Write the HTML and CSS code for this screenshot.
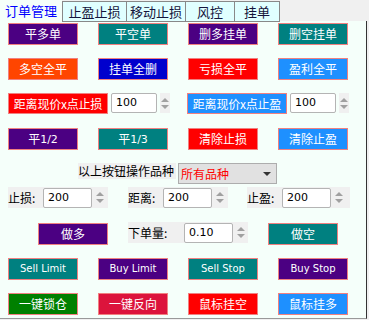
FILE: index.html
```html
<!DOCTYPE html>
<html lang="zh">
<head>
  <meta charset="UTF-8" />
  <title>订单管理</title>
  <link rel="stylesheet" href="styles.css">
</head>
<body>

  <!-- 标签栏 -->
  <div class="tabs">
    <div class="tab active t1">订单管理</div>
    <div class="tab t2">止盈止损</div>
    <div class="tab t3">移动止损</div>
    <div class="tab t4">风控</div>
    <div class="tab t5 last">挂单</div>
  </div>

  <div class="panel">
    <div class="grid">
      <div class="btn indigo">平多单</div>
      <div class="btn teal">平空单</div>
      <div class="btn indigo">删多挂单</div>
      <div class="btn teal">删空挂单</div>
    </div>
    <div class="grid">
      <div class="btn orange">多空全平</div>
      <div class="btn mblue">挂单全删</div>
      <div class="btn red">亏损全平</div>
      <div class="btn dblue">盈利全平</div>
    </div>

    <!-- 距离现价 -->
    <div class="dist-row">
      <div class="dist-group">
        <div class="btn red wide">距离现价x点止损</div>
        <div class="spin">
          <div class="spin-box">100</div>
          <div class="spin-arrows"><span class="up"></span><span class="down"></span></div>
        </div>
      </div>
      <div class="dist-group">
        <div class="btn dblue wide">距离现价x点止盈</div>
        <div class="spin">
          <div class="spin-box">100</div>
          <div class="spin-arrows"><span class="up"></span><span class="down"></span></div>
        </div>
      </div>
    </div>

    <div class="grid">
      <div class="btn indigo">平<span class="latin">1/2</span></div>
      <div class="btn teal">平<span class="latin">1/3</span></div>
      <div class="btn red">清除止损</div>
      <div class="btn dblue">清除止盈</div>
    </div>

    <!-- 品种选择 -->
    <div class="product-row">
      <div class="plain-label">以上按钮操作品种</div>
      <div class="select">所有品种<span class="caret"></span></div>
    </div>

    <div class="param-row">
      <div class="field w100">
        <span class="field-label">止损:</span>
        <div class="spin-box narrow">200</div>
        <div class="spin-arrows"><span class="up"></span><span class="down"></span></div>
      </div>
      <div class="field w100 gap20">
        <span class="field-label">距离:</span>
        <div class="spin-box narrow">200</div>
        <div class="spin-arrows"><span class="up"></span><span class="down"></span></div>
      </div>
      <div class="field w103 gap19">
        <span class="field-label">止盈:</span>
        <div class="spin-box narrow">200</div>
        <div class="spin-arrows"><span class="up"></span><span class="down"></span></div>
      </div>
    </div>

    <div class="order-row">
      <div class="btn indigo">做多</div>
      <div class="field w120 gap20">
        <span class="field-label lot">下单量:</span>
        <div class="spin-box narrow">0.10</div>
        <div class="spin-arrows"><span class="up"></span><span class="down"></span></div>
      </div>
      <div class="btn teal gap20">做空</div>
    </div>

    <div class="grid">
      <div class="btn teal small">Sell Limit</div>
      <div class="btn indigo small">Buy Limit</div>
      <div class="btn teal small">Sell Stop</div>
      <div class="btn indigo small">Buy Stop</div>
    </div>
    <div class="grid">
      <div class="btn green">一键锁仓</div>
      <div class="btn crimson">一键反向</div>
      <div class="btn red">鼠标挂空</div>
      <div class="btn dblue">鼠标挂多</div>
    </div>
  </div>

</body>
</html>
```

FILE: styles.css
```css
* {
  margin: 0;
  padding: 0;
  box-sizing: border-box;
}
body {
  background: #f0f0f0;
  font-family: "Noto Sans CJK SC", "DejaVu Sans", sans-serif;
  font-size: 12px;
  width: 369px;
  height: 320px;
  overflow: hidden;
}

/* 标签栏 */
.tabs {
  display: flex;
  height: 21px;
  background: #f0f0f0;
}
.tab {
  font-size: 13px;
  line-height: 19px;
  text-align: center;
  color: #14143c;
  background: #e0ffff;
  border: 1px solid #888;
  border-right: none;
  margin-top: 1px;
  height: 21px;
}
.tab.last {
  border-right: 1px solid #888;
}
.tab.active {
  background: #f5fffa;
  color: #0000ff;
  border: none;
  margin-top: 0;
  height: 21px;
  line-height: 22px;
}
.t1 { width: 62px; }
.t2 { width: 64px; }
.t3 { width: 59px; }
.t4 { width: 49px; }
.t5 { width: 46px; }

/* 主面板 */
.panel {
  width: 367px;
  height: 298px;
  background: #f5fffa;
  border-right: 1px solid #333;
  border-bottom: 1px solid #999;
  padding-top: 2px;
}

.grid {
  display: grid;
  grid-template-columns: repeat(4, 70px);
  column-gap: 20px;
  padding-left: 8px;
  height: 35px;
  align-items: start;
}

.btn {
  height: 22px;
  width: 70px;
  border: 1px solid #f08080;
  color: #fff;
  display: flex;
  align-items: center;
  justify-content: center;
  font-size: 12px;
  line-height: 1;
}
.btn.wide {
  width: 100px;
  height: 21px;
  font-size: 12px;
  letter-spacing: -0.2px;
}
.btn.small {
  font-family: "DejaVu Sans", sans-serif;
  font-size: 10px;
}
.latin {
  font-family: "DejaVu Sans", sans-serif;
  font-size: 11px;
}

.indigo { background: #4b0082; }
.teal { background: #008080; }
.orange { background: #ff4500; }
.mblue { background: #0000cd; }
.red { background: #ff0000; }
.dblue { background: #1e90ff; }
.green { background: #008000; }
.crimson { background: #dc143c; }

/* 距离现价一行 */
.dist-row {
  display: flex;
  padding-left: 8px;
  height: 35px;
}
.dist-group {
  display: flex;
  width: 180px;
  gap: 3px;
  align-items: flex-start;
}
.spin {
  display: flex;
  gap: 3px;
}
.spin-box {
  width: 46px;
  height: 20px;
  background: #fff;
  border: 1px solid #b4b4b4;
  border-radius: 2px;
  font-family: "DejaVu Sans", sans-serif;
  font-size: 11px;
  color: #000;
  line-height: 18px;
  padding-left: 4px;
}
.spin-box.narrow {
  width: 49px;
}
.spin-arrows {
  width: 10px;
  height: 20px;
  background: #f0f0f0;
  display: flex;
  flex-direction: column;
  align-items: center;
  justify-content: center;
  gap: 3px;
}
.spin-arrows .up {
  border-left: 4px solid transparent;
  border-right: 4px solid transparent;
  border-bottom: 4px solid #a0a0a0;
}
.spin-arrows .down {
  border-left: 4px solid transparent;
  border-right: 4px solid transparent;
  border-top: 4px solid #a0a0a0;
}

/* 品种选择 */
.product-row {
  display: flex;
  padding-left: 78px;
  height: 24px;
  gap: 2px;
  align-items: flex-start;
}
.plain-label {
  background: #f0f0f0;
  font-size: 12px;
  line-height: 16px;
  height: 16px;
  width: 98px;
  white-space: nowrap;
  color: #000;
}
.select {
  width: 99px;
  height: 21px;
  background: #e1e1e1;
  border: 1px solid #adadad;
  color: #ff0000;
  font-size: 12px;
  line-height: 19px;
  padding-left: 2px;
  position: relative;
}
.caret {
  position: absolute;
  right: 5px;
  top: 8px;
  border-left: 4px solid transparent;
  border-right: 4px solid transparent;
  border-top: 4px solid #333;
}

/* 参数行 */
.param-row,
.order-row {
  display: flex;
  padding-left: 8px;
  height: 35px;
  align-items: flex-start;
}
.order-row {
  padding-left: 38px;
  height: 36px;
}
.order-row .btn {
  margin-top: 1px;
}
.field {
  display: flex;
  align-items: center;
  height: 21px;
  background: #f0f0f0;
  gap: 3px;
}
.field-label {
  width: 32px;
  font-size: 12px;
  color: #000;
  white-space: nowrap;
}
.field-label.lot {
  width: 53px;
}
.w100 { width: 100px; }
.w103 { width: 103px; }
.w120 { width: 120px; }
.gap20 { margin-left: 20px; }
.gap19 { margin-left: 19px; }
```
